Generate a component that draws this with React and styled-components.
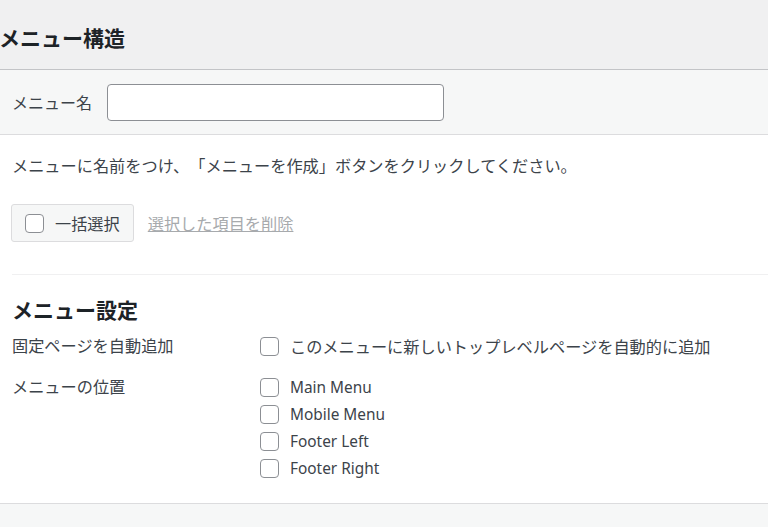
import React from 'react';
import styled, { createGlobalStyle } from 'styled-components';

const GlobalStyle = createGlobalStyle`
  html, body {
    margin: 0;
    padding: 0;
    background: #f0f0f1;
  }
  body {
    font-family: "Noto Sans", "Noto Sans CJK JP", sans-serif;
    color: #3c434a;
    font-size: 16.2px;
    text-spacing-trim: space-all;
  }
`;

const Page = styled.div`
  width: 768px;
  height: 527px;
  overflow: hidden;
  background: #f0f0f1;
`;

const TopTitle = styled.h2`
  margin: 0 0 0 -1px;
  height: 70px;
  display: flex;
  align-items: center;
  padding-top: 4px;
  box-sizing: border-box;
  font-size: 21px;
  font-weight: 700;
  color: #1d2327;
  border-bottom: 1px solid #c3c4c7;
`;

const Panel = styled.div`
  background: #fff;
`;

const NameBar = styled.div`
  display: flex;
  align-items: center;
  gap: 15px;
  height: 64px;
  padding: 0 12px;
  background: #f6f7f7;
  border-bottom: 1px solid #dcdcde;
`;

const Label = styled.label`
  font-size: 16px;
  color: #3c434a;
`;

const TextInput = styled.input`
  width: 337px;
  height: 37px;
  box-sizing: border-box;
  border: 1px solid #8c8f94;
  border-radius: 4px;
  background: #fff;
  font: inherit;
  padding: 0 8px;
`;

const Body = styled.div`
  padding: 0 0 0 12px;
  border-bottom: 1px solid #dcdcde;
`;

const Hint = styled.p`
  margin: 0;
  padding-top: 19px;
  line-height: 24px;
`;

const BulkRow = styled.div`
  display: flex;
  align-items: center;
  gap: 14px;
  margin-top: 26px;
  padding-bottom: 32px;
  border-bottom: 1px solid #f0f0f1;
`;

const BulkButton = styled.label`
  display: inline-flex;
  align-items: center;
  gap: 11px;
  height: 38px;
  box-sizing: border-box;
  padding: 0 13px;
  margin-left: -1px;
  background: #f6f7f7;
  border: 1px solid #dcdcde;
  border-radius: 3px;
`;

const Box = styled.span`
  display: inline-block;
  flex: none;
  width: 19px;
  height: 19px;
  box-sizing: border-box;
  border: 1px solid #8c8f94;
  border-radius: 4px;
  background: #fff;
`;

const DeleteLink = styled.a`
  color: #a7aaad;
  text-decoration: underline;
`;

const SettingsTitle = styled.h3`
  margin: 0;
  padding-top: 21px;
  line-height: 28px;
  font-size: 21px;
  font-weight: 700;
  color: #1d2327;
`;

const SettingRow = styled.div`
  display: grid;
  grid-template-columns: 248px 1fr;
  margin-top: ${(p) => p.$top}px;
`;

const SettingLabel = styled.div`
  line-height: 20px;
  color: #3c434a;
`;

const Options = styled.div`
  display: flex;
  flex-direction: column;
  gap: 7px;
`;

const Option = styled.label`
  display: flex;
  align-items: center;
  gap: 11px;
  height: 20px;
  font-size: ${(p) => (p.$latin ? '15.4px' : '16.2px')};
`;

const Spacer = styled.div`
  height: 25px;
`;

const Footer = styled.div`
  height: 30px;
  background: #f6f7f7;
`;

const locations = ['Main Menu', 'Mobile Menu', 'Footer Left', 'Footer Right'];

export default function App() {
  return (
    <Page>
      <GlobalStyle />
      <TopTitle>メニュー構造</TopTitle>
      <Panel>
        <NameBar>
          <Label>メニュー名</Label>
          <TextInput type="text" />
        </NameBar>
        <Body>
          <Hint>メニューに名前をつけ、「メニューを作成」ボタンをクリックしてください。</Hint>
          <BulkRow>
            <BulkButton>
              <Box />
              一括選択
            </BulkButton>
            <DeleteLink>選択した項目を削除</DeleteLink>
          </BulkRow>
          <SettingsTitle>メニュー設定</SettingsTitle>
          <SettingRow $top={12}>
            <SettingLabel>固定ページを自動追加</SettingLabel>
            <Options>
              <Option>
                <Box />
                このメニューに新しいトップレベルページを自動的に追加
              </Option>
            </Options>
          </SettingRow>
          <SettingRow $top={21}>
            <SettingLabel>メニューの位置</SettingLabel>
            <Options>
              {locations.map((name) => (
                <Option key={name} $latin>
                  <Box />
                  {name}
                </Option>
              ))}
            </Options>
          </SettingRow>
          <Spacer />
        </Body>
        <Footer />
      </Panel>
    </Page>
  );
}
